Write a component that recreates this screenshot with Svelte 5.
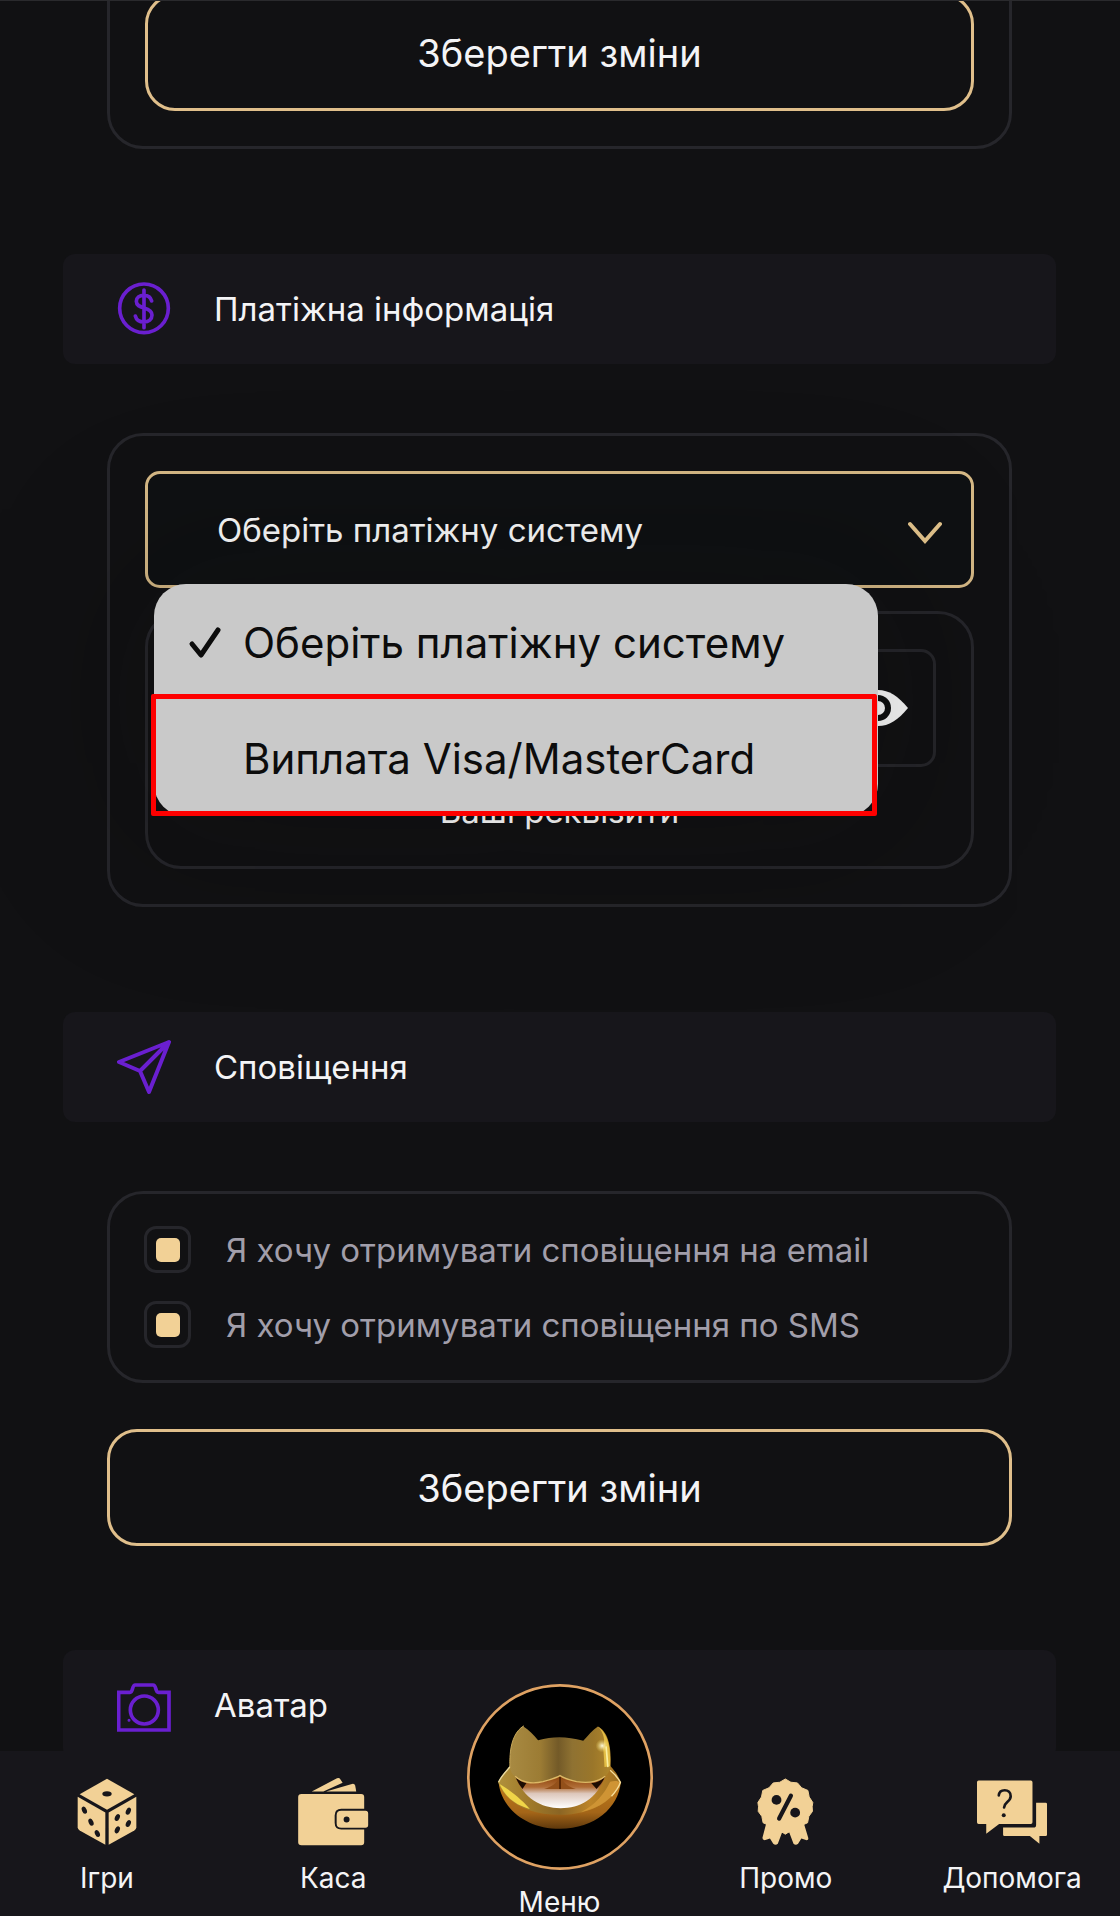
<script>
  let system = $state('none');
  let byEmail = $state(true);
  let bySms = $state(true);
  const options = [
    { value: 'none', label: 'Оберіть платіжну систему' },
    { value: 'card', label: 'Виплата Visa/MasterCard' },
  ];
</script>

<div class="shell">
  <main>
    <div class="content">
      <section class="card">
        <button class="save" type="button">Зберегти зміни</button>
      </section>

      <h2 class="head">
        <svg class="icon" viewBox="52 32 162 162" fill="none" stroke="#6a1fd0" stroke-width="11" stroke-linecap="round">
          <circle cx="133" cy="111" r="73" />
          <path d="M133 56v113M156 89c-3-12-12-17-23-17-14 0-23 7-23 18 0 12 10 16 23 20 14 4 24 9 24 21 0 13-10 21-24 21-13 0-23-6-26-18" />
        </svg>
        Платіжна інформація
      </h2>

      <section class="card payment">
        <div class="picker">
          <select class="select" aria-label="Платіжна система" bind:value={system}>
            {#each options as o}
              <option value={o.value}>{o.label}</option>
            {/each}
          </select>
          <svg class="chevron" viewBox="0 0 34 24" fill="none" stroke="#e3c48c" stroke-width="4" stroke-linecap="round">
            <path d="M2 3l15 17L32 3" />
          </svg>
          <ul class="menu">
            {#each options as o}
              <li>
                <button class="option" class:marked={o.value === 'card'} type="button" onclick={() => (system = o.value)}>
                  <svg class="tick" viewBox="0 0 34 34" fill="none" stroke="#0c0c0c" stroke-width="5" stroke-linecap="round" stroke-linejoin="round">
                    {#if system === o.value}<path d="M4 19l9 11L30 5" />{/if}
                  </svg>
                  {o.label}
                </button>
              </li>
            {/each}
          </ul>
        </div>
        <div class="card details">
          <div class="field">
            <input id="requisites" type="password" />
            <svg class="eye" viewBox="0 0 60 36">
              <path d="M0 18C10 6 19 0 30 0s20 6 30 18C50 30 41 36 30 36S10 30 0 18z" fill="#fff" />
              <circle cx="30" cy="18" r="13" fill="#0d0e0e" />
              <circle cx="30" cy="18" r="7" fill="#fff" />
            </svg>
          </div>
          <label for="requisites">Ваші реквізити</label>
        </div>
      </section>

      <h2 class="head">
        <svg class="icon" viewBox="0 0 54 54" fill="none" stroke="#6a1fd0" stroke-width="4" stroke-linejoin="round">
          <path d="M52 2L2 22l21 9 9 21zM52 2L23 31" />
        </svg>
        Сповіщення
      </h2>

      <section class="card notices">
        <label class="check"><input type="checkbox" bind:checked={byEmail} />Я хочу отримувати сповіщення на email</label>
        <label class="check"><input type="checkbox" bind:checked={bySms} />Я хочу отримувати сповіщення по SMS</label>
      </section>
      <button class="save outer" type="button">Зберегти зміни</button>

      <h2 class="head">
        <svg class="icon" viewBox="170 36 162 162" fill="none" stroke="#6a1fd0" stroke-width="11">
          <path d="M175 79h34c10 0 5-22 16-22h53c11 0 6 22 16 22h32v113H175z" />
          <circle cx="252" cy="132" r="42" />
          <circle cx="206" cy="163" r="2" stroke-width="5" />
        </svg>
        Аватар
      </h2>
    </div>
  </main>

  <nav>
    <a href="#games">
      <svg class="dice" viewBox="50 325 180 203">
        <g fill="#f2d196">
          <path d="M140 327l82 46-82 47-82-47z" />
          <path d="M52 381l83 47v97l-77-43q-6-4-6-10z" />
          <path d="M228 381l-83 47v97l77-43q6-4 6-10z" />
        </g>
        <g fill="#17161b">
          <ellipse cx="140" cy="372" rx="14" ry="8" />
          <ellipse cx="72" cy="421" rx="7" ry="11" transform="rotate(-25 72 421)" />
          <ellipse cx="92" cy="457" rx="7" ry="11" transform="rotate(-25 92 457)" />
          <ellipse cx="111" cy="491" rx="7" ry="11" transform="rotate(-25 111 491)" />
          <ellipse cx="171" cy="443" rx="7" ry="11" transform="rotate(25 171 443)" />
          <ellipse cx="204" cy="424" rx="7" ry="11" transform="rotate(25 204 424)" />
          <ellipse cx="171" cy="480" rx="7" ry="11" transform="rotate(25 171 480)" />
          <ellipse cx="204" cy="461" rx="7" ry="11" transform="rotate(25 204 461)" />
        </g>
      </svg>
      Ігри
    </a>
    <a href="#cash">
      <svg class="wallet" viewBox="712 325 213 205" fill="#f2d196">
        <path d="M753 366l76-40q7-3 10 3l7 10-58 27z" />
        <path d="M796 366l78-23q8-2 10 5l3 18z" />
        <path d="M722 373h180q9 0 9 9v36h-69q-20 0-20 20v22q0 20 20 20h69v39q0 9-9 9H722q-10 0-10-9V382q0-9 10-9z" />
        <path fill-rule="evenodd" d="M842 424h73q8 0 8 8v35q0 8-8 8h-73q-14 0-14-13v-25q0-13 14-13zM858 441a9 9 0 100 18 9 9 0 000-18z" />
      </svg>
      Каса
    </a>
    <a class="home" href="#menu">
      <svg class="cat" viewBox="77 72 560 560">
        <defs>
          <linearGradient id="face" x1="0" x2="1">
            <stop offset="0" stop-color="#a88a42" /><stop offset=".3" stop-color="#9c7c34" />
            <stop offset=".48" stop-color="#735a28" /><stop offset=".62" stop-color="#8f7232" />
            <stop offset=".82" stop-color="#9a762a" /><stop offset="1" stop-color="#b0862b" />
          </linearGradient>
          <linearGradient id="jaw" x1="0" x2="1">
            <stop offset="0" stop-color="#b0903c" /><stop offset=".25" stop-color="#a07a2a" />
            <stop offset=".5" stop-color="#8b6524" /><stop offset=".75" stop-color="#bd8428" />
            <stop offset="1" stop-color="#9c6f20" />
          </linearGradient>
          <linearGradient id="chin" x1="0" y1="0" x2="0" y2="1">
            <stop offset="0" stop-color="#c07a18" /><stop offset=".65" stop-color="#a46518" /><stop offset="1" stop-color="#5e380c" />
          </linearGradient>
          <linearGradient id="teeth" x1="0" y1="0" x2="0" y2="1">
            <stop offset="0" stop-color="#8a3f08" /><stop offset=".35" stop-color="#b06d36" />
            <stop offset=".55" stop-color="#ddc7bb" /><stop offset="1" stop-color="#fff" />
          </linearGradient>
          <radialGradient id="glint">
            <stop offset="0" stop-color="#fffbe0" /><stop offset="1" stop-color="#f1d75a" stop-opacity="0" />
          </radialGradient>
        </defs>
        <circle cx="357" cy="352" r="276" fill="#000" stroke="#dfa263" stroke-width="8" />
        <path d="M172 368c8 76 80 140 185 140s176-64 183-140l-30 20H200z" fill="url(#chin)" />
        <path d="M206 318c-14 20-30 34-35 50 20 58 88 98 186 98s163-44 183-98c-8-24-20-36-32-50z" fill="url(#jaw)" />
        <path d="M248 198c-24 14-36 44-40 76-3 30-2 44 0 56 4 12 8 18 16 22 18 16 50 22 82 14 28-8 42-12 51-18 9 6 24 12 50 18 40 6 66 0 86-16 8-6 14-16 16-32 3-46-4-102-38-118-16 10-30 28-44 43-50-14-90-14-136-2-14-16-26-30-44-41z" fill="url(#face)" />
        <path d="M248 198c-24 14-36 44-40 76-3 30-2 40-2 48" fill="none" stroke="#c8a85a" stroke-width="3" />
        <path d="M471 200c20 20 22 44 16 64 2 22 3 40 4 58l17-2c2-50-4-98-37-120z" fill="#e3bd45" />
        <circle cx="484" cy="258" r="20" fill="url(#glint)" />
        <path d="M496 262l5 58" stroke="#fbf0a0" stroke-width="5" stroke-linecap="round" />
        <path d="M222 350c18 18 50 24 84 16 28-8 42-12 51-18 9 6 24 12 50 18 40 6 66 0 86-16-24 66-74 96-134 96-62 0-114-34-137-96z" fill="url(#teeth)" />
        <path d="M222 350c12 14 22 18 34 20l-12 18c-8-10-16-24-22-38zM493 350c-12 14-26 20-42 20l16 18c10-10 20-24 26-38z" fill="#1d0c02" />
        <path d="M357 350c-8 20-26 32-48 38h96c-22-6-38-18-48-38z" fill="#93501a" />
        <path d="M357 350v38" stroke="#5c2a06" stroke-width="6" />
        <path d="M222 350c18 18 50 24 84 16 28-8 42-12 51-18 9 6 24 12 50 18 40 6 66 0 86-16" fill="none" stroke="#dcb865" stroke-width="4" />
        <path d="M172 366c18 46 50 70 94 82-18-22-52-52-92-76z" fill="#f0d548" />
        <path d="M540 368c-20 48-64 78-120 90 44-24 70-54 88-92 14-4 24-2 32 2z" fill="#cf9434" />
        <path d="M508 332c12 10 24 24 31 36-6 18-16 30-27 42" fill="none" stroke="#f7df9c" stroke-width="4" />
        <path d="M206 322c-14 16-28 30-34 46" fill="none" stroke="#e8d9a0" stroke-width="4" />
      </svg>
      Меню
    </a>
    <a href="#promo">
      <svg class="promo" viewBox="290 412 171 208">
        <path fill="#f2d196" d="M318 545l-13 50q0 8 9 7l14-5 10 16q7 7 14 0l13-34h22l13 34q7 7 14 0l10-16 14 5q9 1 7-7l-15-50z" />
        <path fill="#f2d196" d="M375 415l17 10 20 2 13 15 19 8 4 20 11 17-2 13 1 14-11 15-4 20-18 8-13 15-20 1-17 11-17-11-20-1-13-15-18-8-4-20-11-15 1-14-2-13 11-17 4-20 19-8 13-15 20-2z" stroke="#f2d196" stroke-width="3" stroke-linejoin="round" />
        <g fill="#17161b"><circle cx="348" cy="479" r="15" /><circle cx="405" cy="518" r="15" /></g>
        <path d="M392 466l-36 70" stroke="#17161b" stroke-width="13" stroke-linecap="round" />
      </svg>
      Промо
    </a>
    <a href="#help">
      <svg class="chat" viewBox="946 416 218 198">
        <g fill="#f2d196">
          <path d="M954 420h158q5 0 5 5v121q0 5-5 5h-96l-39 30v-30h-23q-5 0-5-5V425q0-5 5-5z" />
          <path d="M1128 487h29q4 0 4 4v92q0 5-4 5h-19v23l-29-23h-77q-4 0-4-4v-22h92q8 0 8-8z" />
        </g>
        <path d="M1015 465c1-11 8-16 18-16s18 7 18 18c0 17-20 18-20 34" fill="none" stroke="#17161b" stroke-width="8" stroke-linecap="round" />
        <circle cx="1030" cy="525" r="6" fill="#17161b" />
      </svg>
      Допомога
    </a>
  </nav>
</div>

<style>
  :global(body) { margin: 0; background: #111113; }
  * { box-sizing: border-box; }
  button, select, input { font: inherit; color: inherit; }
  .shell {
    display: flex;
    flex-direction: column;
    height: 100vh;
    overflow: hidden;
    border-top: 1px solid #2a2a2d;
    background: #111113;
    color: #f4f4f6;
    font-family: Inter, "Liberation Sans", sans-serif;
    font-size: 33px;
  }
  main { flex: 1; min-height: 0; overflow: hidden; }
  .content {
    display: flex;
    flex-direction: column;
    margin-top: -45px;
    padding: 0 64px 0 63px;
  }
  .card {
    border: 3px solid #26262b;
    border-radius: 36px;
    padding: 35px;
    margin: 0 44px;
  }
  .save {
    display: block;
    width: 100%;
    height: 117px;
    border: 3px solid #e0bf8b;
    border-radius: 30px;
    background: none;
    font-size: 38px;
  }
  .save.outer { width: auto; margin: 46px 44px 0; }
  .head {
    display: flex;
    align-items: center;
    gap: 43px;
    height: 110px;
    flex: none;
    margin: 105px 0 69px;
    padding-left: 54px;
    border-radius: 12px;
    background: #17161b;
    font-size: 33px;
    font-weight: 400;
  }
  .save.outer + .head { margin-top: 104px; }
  .icon { width: 54px; height: 54px; }
  .payment { display: flex; flex-direction: column; gap: 23px; }
  .picker { position: relative; z-index: 1; }
  .select {
    display: block;
    width: 100%;
    height: 117px;
    padding: 0 69px;
    border: 3px solid #d6b986;
    border-radius: 15px;
    background: #0f1113;
    color: #fff;
    appearance: none;
  }
  .chevron {
    position: absolute;
    right: 32px;
    top: 50px;
    width: 34px;
    height: 24px;
    pointer-events: none;
  }
  .menu {
    position: absolute;
    top: 113px;
    left: 9px;
    right: 96px;
    margin: 0;
    padding: 0;
    list-style: none;
    border-radius: 32px;
    background: #c9c9c9;
    box-shadow: 0 0 160px 40px rgb(8 12 8 / 20%);
    color: #0c0c0c;
    font-size: 42px;
  }
  .option {
    position: relative;
    display: flex;
    align-items: center;
    gap: 21px;
    width: 100%;
    height: 116px;
    padding: 0 34px;
    border: 0;
    background: none;
    text-align: left;
  }
  .marked::after {
    content: "";
    position: absolute;
    inset: -6px 1px 0 -3px;
    border: 5px solid #fe0000;
    border-radius: 2px;
  }
  .tick { width: 34px; height: 34px; flex: none; }
  .details {
    display: flex;
    flex-direction: column;
    gap: 24px;
    margin: 0;
    color: #fff;
    line-height: 40px;
    text-align: center;
  }
  .field {
    display: flex;
    align-items: center;
    height: 118px;
    padding: 0 25px;
    border: 3px solid #26262b;
    border-radius: 15px;
  }
  .field input { flex: 1; min-width: 0; border: 0; outline: 0; background: none; }
  .eye { width: 60px; height: 36px; }
  .notices { display: flex; flex-direction: column; gap: 28px; padding: 32px 34px; }
  .check { display: flex; align-items: center; gap: 35px; color: #a19eaa; }
  .check input {
    flex: none;
    width: 47px;
    height: 47px;
    margin: 0;
    border: 3px solid #26262b;
    border-radius: 12px;
    appearance: none;
    display: grid;
    place-items: center;
  }
  .check input:checked::before {
    content: "";
    width: 24px;
    height: 24px;
    border-radius: 5px;
    background: #f2d196;
  }
  nav {
    display: flex;
    justify-content: space-between;
    flex: none;
    height: 165px;
    padding: 27px 40px 0 39px;
    background: #17161b;
    font-size: 28px;
    line-height: 28px;
  }
  nav a {
    position: relative;
    display: flex;
    flex-direction: column;
    align-items: center;
    gap: 18px;
    width: 136px;
    color: inherit;
    text-decoration: none;
  }
  nav svg { flex: none; height: 68px; }
  .dice { width: 60px; }
  .wallet { width: 71px; }
  .promo { width: 57px; }
  .chat { width: 72px; }
  nav .home { margin-top: -94px; }
  nav .cat { width: 186px; height: 186px; }
</style>
